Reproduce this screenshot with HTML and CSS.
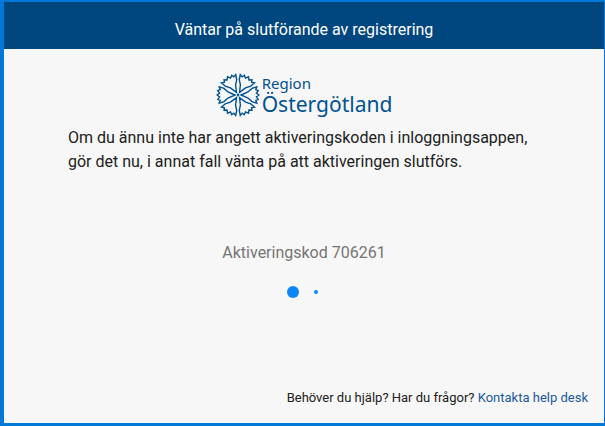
FILE: index.html
```html
<!DOCTYPE html>
<html lang="sv">
<head>
    <meta charset="UTF-8">
    <meta name="viewport" content="width=device-width, initial-scale=1.0">
    <title>Väntar på slutförande av registrering</title>
    <link rel="stylesheet" href="styles.css">
</head>
<body>
    <header class="header">
        <h1 class="title">Väntar på slutförande av registrering</h1>
    </header>
    <main class="content">
        <div class="logo">
            <svg class="logo-mark" viewBox="-22 -22 44 44" aria-hidden="true">
                <defs>
                    <path id="petal" d="M0 -3 L-3 -10 L-6.6 -14 L-8.2 -18.8 L-5.4 -17.8 L-4.4 -20.2 L-2 -18.4 L0 -21 L2 -18.4 L4.4 -20.2 L5.4 -17.8 L8.2 -18.8 L6.6 -14 L3 -10 Z"/>
                </defs>
                <use href="#petal" transform="rotate(30)"/>
                <use href="#petal" transform="rotate(90)"/>
                <use href="#petal" transform="rotate(150)"/>
                <use href="#petal" transform="rotate(210)"/>
                <use href="#petal" transform="rotate(270)"/>
                <use href="#petal" transform="rotate(330)"/>
                <circle r="0.5"/>
            </svg>
            <div class="logo-text">
                <span class="logo-small">Region</span>
                <span class="logo-large">Östergötland</span>
            </div>
        </div>
        <p class="message">Om du ännu inte har angett aktiveringskoden i inloggningsappen, gör det nu, i annat fall vänta på att aktiveringen slutförs.</p>
        <p class="code">Aktiveringskod 706261</p>
        <div class="loader" role="status" aria-label="Väntar">
            <span class="dot dot-large"></span>
            <span class="dot dot-small"></span>
        </div>
    </main>
    <footer class="footer">
        Behöver du hjälp? Har du frågor? <a class="help-link" href="#">Kontakta help desk</a>
    </footer>
</body>
</html>
```
FILE: styles.css
```css
* {
    box-sizing: border-box;
}

body {
    display: flex;
    flex-direction: column;
    min-height: 100vh;
    margin: 0;
    border: solid #0078d7;
    border-width: 2px 1px 3px 4px;
    background-color: #f7f7f7;
    color: #212121;
    font-family: Roboto, Arial, sans-serif;
}

.header {
    padding: 16px 16px 7px;
    background-color: #00467f;
    color: #fff;
    text-align: center;
}

.title {
    margin: 0;
    font-size: 16px;
    font-weight: 400;
    line-height: 24px;
}

.content {
    flex: 1;
    padding: 24px 64px 0;
}

.logo {
    display: flex;
    justify-content: center;
    gap: 2px;
    height: 53px;
    color: #005293;
}

.logo-mark {
    width: 44px;
    height: 44px;
    fill: none;
    stroke: #005293;
    stroke-width: 1.4;
}

.logo-text {
    display: flex;
    flex-direction: column;
    font-family: "Noto Sans", sans-serif;
}

.logo-small {
    font-size: 15px;
    line-height: 20px;
}

.logo-large {
    font-size: 21px;
    line-height: 22px;
}

.message {
    margin: 0;
    font-size: 16px;
    line-height: 24px;
}

.code {
    margin: 67px 0 0;
    color: #757575;
    font-size: 16px;
    line-height: 24px;
    text-align: center;
}

.loader {
    display: flex;
    align-items: center;
    justify-content: center;
    gap: 15px;
    height: 54px;
    padding-right: 4px;
}

.dot {
    border-radius: 50%;
    background-color: #0d86f7;
}

.dot-large {
    width: 12px;
    height: 12px;
}

.dot-small {
    width: 4px;
    height: 4px;
}

.footer {
    padding: 15px 16px;
    font-size: 13px;
    line-height: 20px;
    text-align: right;
}

.help-link {
    color: #1a5a9e;
    text-decoration: none;
}
```
